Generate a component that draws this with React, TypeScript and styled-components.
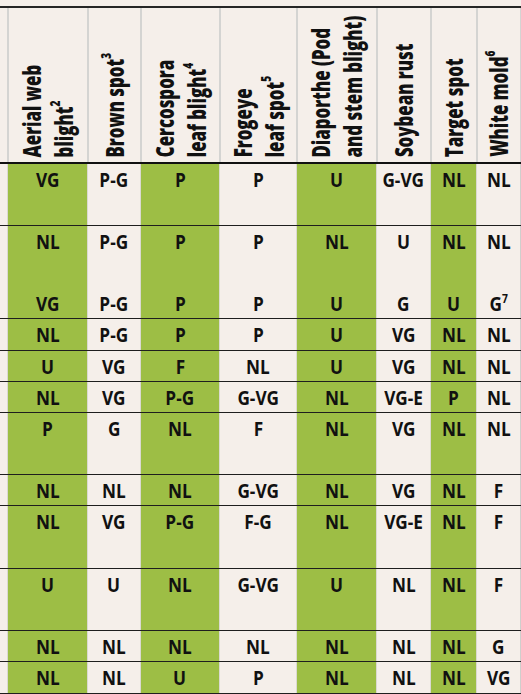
import React from 'react';
import styled, { createGlobalStyle } from 'styled-components';

const GlobalStyle = createGlobalStyle`
  html, body { margin: 0; padding: 0; background: #f5efea; }
  body {
    font-family: "Open Sans", "Liberation Sans", sans-serif;
    color: #111;
  }
`;

const GRID = '7px 80px 53px 79px 77px 80px 54px 46px 45px';
const GREEN = '#9dbe45';
const CREAM = '#f5efea';

const Page = styled.div`
  width: 521px;
  height: 694px;
  background: ${CREAM};
  padding-top: 6px;
  box-sizing: border-box;
  overflow: hidden;
`;

const TopRule = styled.div`
  height: 2px;
  background: #262626;
`;

const HeaderRow = styled.div`
  display: grid;
  grid-template-columns: ${GRID};
  grid-template-rows: 154px;
  height: 156px;
  box-sizing: border-box;
  border-bottom: 2px solid #111;
`;

const HeaderCell = styled.div<{ $edge?: boolean; $last?: boolean }>`
  display: flex;
  justify-content: center;
  align-items: flex-end;
  padding-bottom: 5px;
  min-height: 0;
  box-sizing: border-box;
  border-left: ${(p) => (p.$edge ? 'none' : '2px solid #d4d4d2')};
  border-right: ${(p) => (p.$last ? '1px solid #d4d4d2' : 'none')};
`;

const HeaderLabel = styled.div`
  flex: none;
  writing-mode: vertical-rl;
  transform: translateY(15%) rotate(180deg) scaleY(0.7);
  white-space: nowrap;
  font-size: 24px;
  font-weight: 800;
  line-height: 32px;
  text-align: start;
`;

const Sup = styled.span`
  font-size: 0.6em;
  vertical-align: super;
  line-height: 0;
`;

const Row = styled.div<{ $h: number; $line: boolean }>`
  display: grid;
  grid-template-columns: ${GRID};
  grid-template-rows: 100%;
  height: ${(p) => p.$h}px;
  box-sizing: border-box;
  border-bottom: ${(p) => (p.$line ? '1px solid #1e1e1e' : 'none')};
`;

const Cell = styled.div<{ $green?: boolean; $edge?: boolean; $last?: boolean }>`
  background: ${(p) => (p.$green ? GREEN : CREAM)};
  box-sizing: border-box;
  min-height: 0;
  border-left: ${(p) => (p.$edge ? 'none' : '1px solid #dbd9d1')};
  border-right: ${(p) => (p.$last ? '1px solid #cfcfcc' : 'none')};
  text-align: center;
  font-size: 20px;
  font-weight: 700;
  line-height: 30px;
  padding-top: 1px;
  white-space: nowrap;
`;

const Value = styled.span`
  display: inline-block;
  transform: scaleX(0.86);
`;

type Label = { lines: string[]; sup?: string };

const headers: Label[] = [
  { lines: ['Aerial web', 'blight'], sup: '2' },
  { lines: ['Brown spot'], sup: '3' },
  { lines: ['Cercospora', 'leaf blight'], sup: '4' },
  { lines: ['Frogeye', 'leaf spot'], sup: '5' },
  { lines: ['Diaporthe (Pod', 'and stem blight)'] },
  { lines: ['Soybean rust'] },
  { lines: ['Target spot'] },
  { lines: ['White mold'], sup: '6' },
];

type DataRow = { h: number; line: boolean; values: string[] };

const rows: DataRow[] = [
  { h: 62, line: true, values: ['VG', 'P-G', 'P', 'P', 'U', 'G-VG', 'NL', 'NL'] },
  { h: 62, line: false, values: ['NL', 'P-G', 'P', 'P', 'NL', 'U', 'NL', 'NL'] },
  { h: 31, line: true, values: ['VG', 'P-G', 'P', 'P', 'U', 'G', 'U', 'G^7'] },
  { h: 32, line: true, values: ['NL', 'P-G', 'P', 'P', 'U', 'VG', 'NL', 'NL'] },
  { h: 31, line: true, values: ['U', 'VG', 'F', 'NL', 'U', 'VG', 'NL', 'NL'] },
  { h: 31, line: true, values: ['NL', 'VG', 'P-G', 'G-VG', 'NL', 'VG-E', 'P', 'NL'] },
  { h: 62, line: true, values: ['P', 'G', 'NL', 'F', 'NL', 'VG', 'NL', 'NL'] },
  { h: 31, line: true, values: ['NL', 'NL', 'NL', 'G-VG', 'NL', 'VG', 'NL', 'F'] },
  { h: 63, line: true, values: ['NL', 'VG', 'P-G', 'F-G', 'NL', 'VG-E', 'NL', 'F'] },
  { h: 62, line: true, values: ['U', 'U', 'NL', 'G-VG', 'U', 'NL', 'NL', 'F'] },
  { h: 31, line: true, values: ['NL', 'NL', 'NL', 'NL', 'NL', 'NL', 'NL', 'G'] },
  { h: 32, line: true, values: ['NL', 'NL', 'U', 'P', 'NL', 'NL', 'NL', 'VG'] },
];

function renderValue(v: string) {
  const [base, sup] = v.split('^');
  return (
    <Value>
      {base}
      {sup && <Sup>{sup}</Sup>}
    </Value>
  );
}

export default function App() {
  return (
    <>
      <GlobalStyle />
      <Page>
        <TopRule />
        <HeaderRow>
          <HeaderCell $edge />
          {headers.map((h, i) => (
            <HeaderCell key={i} $last={i === headers.length - 1}>
              <HeaderLabel>
                {h.lines.map((l, j) => (
                  <React.Fragment key={j}>
                    {j > 0 && <br />}
                    {l}
                    {j === h.lines.length - 1 && h.sup && <Sup>{h.sup}</Sup>}
                  </React.Fragment>
                ))}
              </HeaderLabel>
            </HeaderCell>
          ))}
        </HeaderRow>
        {rows.map((r, i) => (
          <Row key={i} $h={r.h} $line={r.line}>
            <Cell $edge />
            {r.values.map((v, j) => (
              <Cell key={j} $green={j % 2 === 0} $last={j === r.values.length - 1}>
                {renderValue(v)}
              </Cell>
            ))}
          </Row>
        ))}
      </Page>
    </>
  );
}
